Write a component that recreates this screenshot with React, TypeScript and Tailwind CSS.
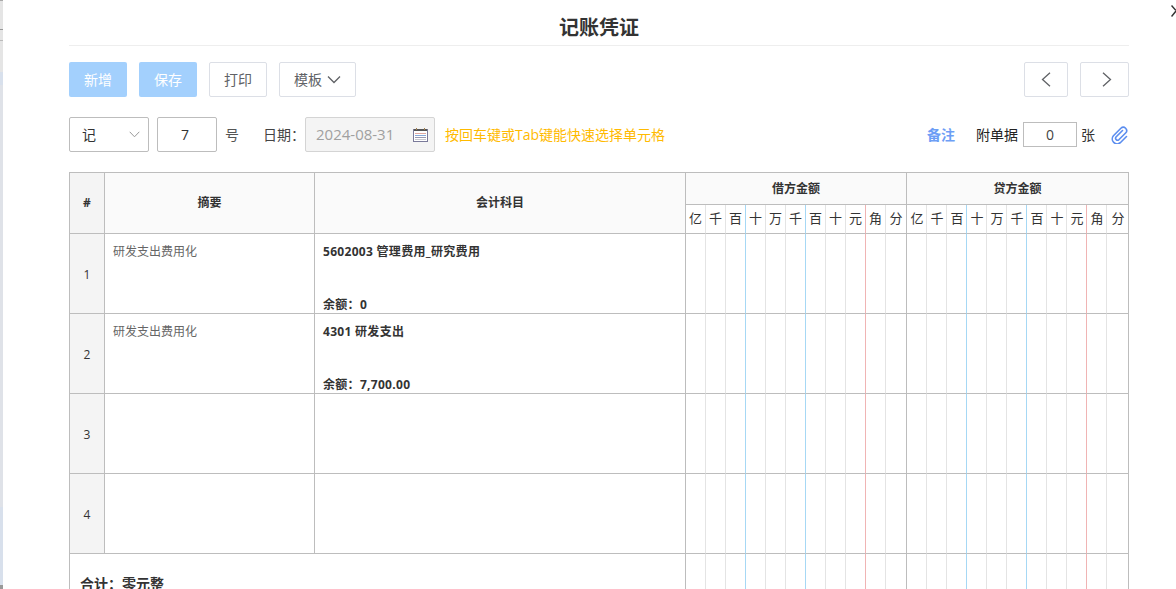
import React from "react";

const units = ["亿", "千", "百", "十", "万", "千", "百", "十", "元", "角", "分"];

const lineColor = (i: number, last: boolean) => {
  if (last) return "border-r-[#bdbdbd]";
  if (i === 2 || i === 5) return "border-r-[#a6d8f5]";
  if (i === 8) return "border-r-[#f0b4b4]";
  return "border-r-[#e4e4e4]";
};

function AmountCells({ head }: { head?: boolean }) {
  return (
    <>
      {[0, 1].map((g) =>
        units.map((u, i) => (
          <td
            key={`${g}-${i}`}
            className={`border-b border-b-[#bdbdbd] border-r p-0 text-center align-middle text-[13px] text-[#333] ${lineColor(i, i === 10)} ${head ? "bg-white" : ""} ${head && g === 1 ? "pl-[1px]" : ""}`}
          >
            {head ? u : null}
          </td>
        ))
      )}
    </>
  );
}

function Row({ n, summary, account, balance }: { n: number; summary?: string; account?: string; balance?: string }) {
  return (
    <tr className="h-[80px]">
      <td className="border-b border-r border-[#bdbdbd] bg-[#f4f4f4] p-0 pt-[2px] text-center align-middle text-[12px] text-[#333]">{n}</td>
      <td className="border-b border-r border-[#bdbdbd] px-2 pt-[9px] align-top text-[12px] leading-[17px] text-[#666]">{summary}</td>
      <td className="border-b border-r border-[#bdbdbd] p-0 align-top">
        {account ? (
          <div className="flex h-[79px] flex-col justify-between pl-[8px] pt-[9px] text-[12px] font-bold leading-[17px] tracking-[0.3px] text-[#333]">
            <div>{account}</div>
            <div>余额：{balance}</div>
          </div>
        ) : null}
      </td>
      <AmountCells />
    </tr>
  );
}

export default function App() {
  return (
    <div className="relative h-[589px] w-[1176px] overflow-hidden bg-white font-['Open_Sans','Noto_Sans_CJK_SC',sans-serif] text-[#333]">
      <div className="absolute bottom-0 left-0 top-0 flex w-[3px] flex-col bg-[#dfe2e8]">
        <div className="h-[1px] bg-[#aaaaaa]" />
        <div className="h-[28px] bg-[#e5e5e5]" />
        <div className="h-[1px] bg-[#999999]" />
        <div className="h-[10px] bg-[#e5e5e5]" />
        <div className="h-[1px] bg-[#bbbbbb]" />
        <div className="h-[31px] bg-[#e5e5e5]" />
        <div className="h-[13px] bg-[#d8e0ec]" />
        <div className="h-[422px]" />
        <div className="h-[78px] bg-[#d8e0ec]" />
        <div className="h-[4px] bg-[#999999]" />
      </div>
      <svg className="absolute right-0 top-[5px]" width="5" height="12" viewBox="0 0 5 12" fill="none" stroke="#333" strokeWidth="1.5">
        <path d="M0.5 0.5L5 5.5M5 6L0.5 11.5" />
      </svg>

      <div className="ml-[69px] w-[1060px]">
        <div className="h-[46px] border-b border-[#eeeeee] pt-[14px] text-center text-[20px] font-bold leading-[28px] text-[#333]">记账凭证</div>

        <div className="mt-[16px] flex h-[35px] items-stretch text-[14px]">
          <button className="w-[58px] rounded-[2px] bg-[#a3d0fd] text-white">新增</button>
          <button className="ml-[12px] w-[58px] rounded-[2px] bg-[#a3d0fd] text-white">保存</button>
          <button className="ml-[12px] w-[58px] rounded-[2px] border border-[#dcdfe6] text-[#606266]">打印</button>
          <button className="ml-[12px] flex w-[77px] items-center justify-center gap-[5px] rounded-[2px] border border-[#dcdfe6] text-[#606266]">
            模板
            <svg width="14" height="9" viewBox="0 0 14 9" fill="none" stroke="#606266" strokeWidth="1.3">
              <path d="M1 1.5l6 6 6-6" />
            </svg>
          </button>
          <button className="ml-auto flex w-[44px] items-center justify-center rounded-[2px] border border-[#dcdfe6]">
            <svg width="10" height="15" viewBox="0 0 10 15" fill="none" stroke="#606266" strokeWidth="1.3">
              <path d="M9 .7L1.5 7.5 9 14.3" />
            </svg>
          </button>
          <button className="ml-[12px] flex w-[49px] items-center justify-center rounded-[2px] border border-[#dcdfe6] pl-[5px]">
            <svg width="10" height="15" viewBox="0 0 10 15" fill="none" stroke="#606266" strokeWidth="1.3">
              <path d="M1 .7l7.5 6.8L1 14.3" />
            </svg>
          </button>
        </div>

        <div className="mt-[20px] flex h-[35px] items-center text-[14px]">
          <div className="flex h-[35px] w-[80px] items-center justify-between rounded-[2px] border border-[#bdbdbd] pl-[12px] pr-[8px]">
            <span className="text-[#333]">记</span>
            <svg width="11" height="7" viewBox="0 0 11 7" fill="none" stroke="#999" strokeWidth="1">
              <path d="M.7.8l4.8 5 4.8-5" />
            </svg>
          </div>
          <div className="ml-[8px] flex h-[35px] w-[60px] items-center justify-center rounded-[2px] border border-[#bdbdbd] pr-[4px] text-[#333]">7</div>
          <span className="ml-[8px] text-[#555]">号</span>
          <span className="ml-[24px] text-[#444]">日期：</span>
          <div className="flex h-[35px] w-[130px] items-center justify-between rounded-[2px] border border-[#d4d4d4] bg-[#f4f4f4] pl-[10px] pr-[6px] text-[15px] text-[#a0a0a0]">
            2024-08-31
            <svg width="15" height="15" viewBox="0 0 15 15">
              <rect x="0.5" y="2.5" width="14" height="12" fill="#fff" stroke="#7a7a9a" />
              <rect x="1" y="2" width="13" height="2" fill="#555" />
              <path d="M3 1h1v2H3zM11 1h1v2h-1z" fill="#a08050" />
              <path d="M2 6h11v1H2z" fill="#e0a8a0" />
              <path d="M2 8h11v1H2z" fill="#88a8d8" />
              <path d="M2 10h11v1H2z" fill="#9a9ab0" />
              <path d="M2 12h11v1H2z" fill="#c8c8d0" />
            </svg>
          </div>
          <span className="ml-[10px] text-[14px] text-[#ffba00]">按回车键或Tab键能快速选择单元格</span>
          <span className="ml-auto text-[14px] font-bold text-[#6d9ef5]">备注</span>
          <span className="ml-[21px] text-[14px] text-[#222]">附单据</span>
          <div className="ml-[5px] flex h-[25px] w-[54px] items-center justify-center border border-[#bdbdbd] text-[#444]">0</div>
          <span className="ml-[4px] text-[14px] text-[#333]">张</span>
          <svg className="ml-[15px]" width="19" height="19" viewBox="0 0 19 19" fill="none" stroke="#5b8def" strokeWidth="1.6" strokeLinecap="round" strokeLinejoin="round">
            <path d="M12.5 5.5L6 12a2 2 0 0 0 2.8 2.8L15.6 8a3.3 3.3 0 0 0-4.7-4.7L3.4 10.8a4.9 4.9 0 0 0 6.9 6.9l6.2-6.2" />
          </svg>
        </div>

        <table className="mt-[20px] w-[1060px] table-fixed border-separate border-spacing-0 border-l border-t border-[#bdbdbd]">
          <colgroup>
            <col className="w-[35px]" />
            <col className="w-[210px]" />
            <col className="w-[371px]" />
            {units.map((_, i) => (
              <col key={i} className={i === 10 ? "w-[21px]" : "w-[20px]"} />
            ))}
            {units.map((_, i) => (
              <col key={`c${i}`} className={i === 10 ? "w-[22px]" : "w-[20px]"} />
            ))}
          </colgroup>
          <thead>
            <tr className="h-[32px]">
              <th rowSpan={2} className="border-b border-r border-[#bdbdbd] bg-[#f4f4f4] p-0 text-[12px] font-bold text-[#333]">#</th>
              <th rowSpan={2} className="border-b border-r border-[#bdbdbd] bg-[#fafafa] p-0 text-[12px] font-bold text-[#333]">摘要</th>
              <th rowSpan={2} className="border-b border-r border-[#bdbdbd] bg-[#fafafa] p-0 text-[12px] font-bold text-[#333]">会计科目</th>
              <th colSpan={11} className="border-b border-r border-[#bdbdbd] bg-[#fafafa] p-0 text-[12px] font-bold text-[#333]">借方金额</th>
              <th colSpan={11} className="border-b border-r border-[#bdbdbd] bg-[#fafafa] p-0 text-[12px] font-bold text-[#333]">贷方金额</th>
            </tr>
            <tr className="h-[29px]">
              <AmountCells head />
            </tr>
          </thead>
          <tbody>
            <Row n={1} summary="研发支出费用化" account="5602003 管理费用_研究费用" balance="0" />
            <Row n={2} summary="研发支出费用化" account="4301 研发支出" balance="7,700.00" />
            <Row n={3} />
            <Row n={4} />
            <tr className="h-[80px]">
              <td colSpan={3} className="border-b border-r border-[#bdbdbd] pl-[10px] pt-[20px] align-top text-[14px] font-bold leading-[20px] text-[#333]">合计：零元整</td>
              <AmountCells />
            </tr>
          </tbody>
        </table>
      </div>
    </div>
  );
}
